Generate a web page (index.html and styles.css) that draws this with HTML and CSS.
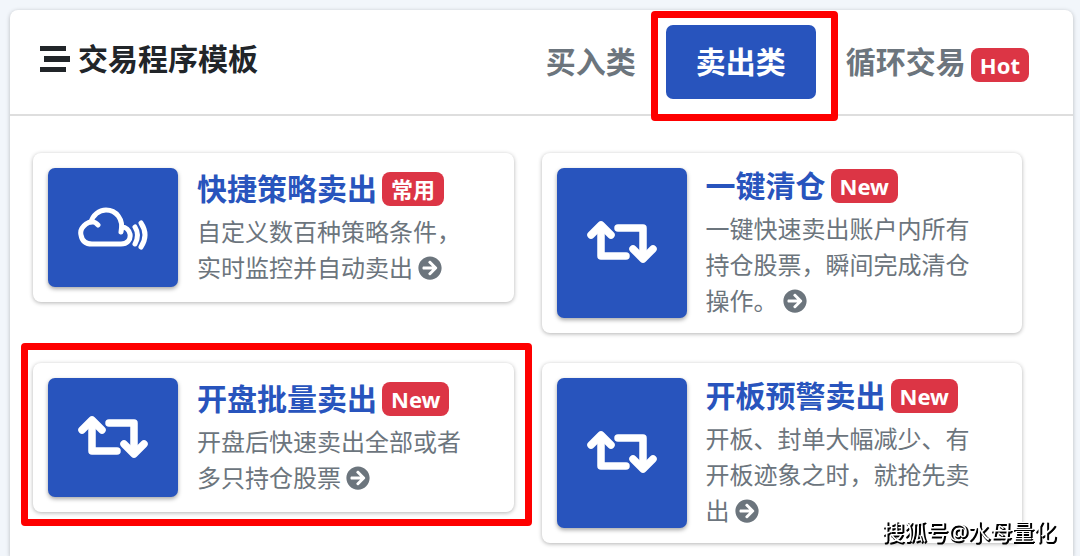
FILE: index.html
```html
<!DOCTYPE html>
<html lang="zh-CN">
<head>
    <meta charset="UTF-8">
    <meta name="viewport" content="width=device-width, initial-scale=1.0">
    <title>交易程序模板</title>
    <link rel="stylesheet" href="styles.css">
</head>
<body>
    <!-- Shared icons -->
    <svg class="sprite" aria-hidden="true">
        <symbol id="icon-retweet" viewBox="0 0 70 44">
            <g fill="none" stroke="#fff" stroke-width="7.500" stroke-linecap="round" stroke-linejoin="round">
                <path d="M4 14 L14 4 L24 14" />
                <path d="M14 5 V35 H39" />
                <path d="M31 7 H56 V37" />
                <path d="M46 28 L56 38 L66 28" />
            </g>
        </symbol>
        <symbol id="icon-arrow" viewBox="0 0 512 512">
            <path fill="currentColor" d="M256 8c137 0 248 111 248 248S393 504 256 504 8 393 8 256 119 8 256 8zm-28.900 143.600l75.500 72.400H120c-13.300 0-24 10.700-24 24v16c0 13.300 10.700 24 24 24h182.600l-75.500 72.400c-9.700 9.300-9.900 24.800-.4 34.300l11 10.900c9.400 9.400 24.600 9.400 33.900 0L404.300 273c9.400-9.400 9.400-24.600 0-33.900L271.600 106.300c-9.400-9.400-24.600-9.400-33.900 0l-11 10.900c-9.500 9.600-9.300 25.100.4 34.400z" />
        </symbol>
    </svg>

    <main class="panel">
        <header class="panel-header">
            <h1 class="panel-title">
                <svg class="stream" viewBox="0 0 30 28" aria-hidden="true">
                    <path fill="currentColor" d="M0 1h26v5H0zM4 11h26v6H4zM0 22h26v5H0z" />
                </svg>
                交易程序模板
            </h1>
            <nav class="tabs">
                <button type="button" class="tab">买入类</button>
                <button type="button" class="tab active marked">卖出类</button>
                <button type="button" class="tab">循环交易<span class="badge">Hot</span></button>
            </nav>
        </header>

        <section class="cards">
            <article class="card">
                <div class="thumb">
                    <svg class="thumb-icon" viewBox="0 0 70 44" aria-hidden="true">
                        <g fill="none" stroke="#fff" stroke-width="5" stroke-linecap="round" stroke-linejoin="round">
                            <path d="M20 19 C17 15 12 15 8 18 C4 21 2 25 3 29 C4 35 8 38 14 38 H43 C49 38 53 34 52 28 C51 24 48 21 44 21" />
                            <path d="M13 16 C15 9 21 4 28 4 C38 4 46 13 43 26" />
                            <path d="M57 21 Q62 29 57 38" />
                            <path d="M63 17 Q71 29 63 41" />
                        </g>
                    </svg>
                </div>
                <div class="card-body">
                    <h2 class="card-title">快捷策略卖出<span class="badge">常用</span></h2>
                    <p class="card-text">自定义数百种策略条件，实时监控并自动卖出 <svg class="arrow"><use href="#icon-arrow" /></svg></p>
                </div>
            </article>

            <article class="card">
                <div class="thumb">
                    <svg class="thumb-icon" aria-hidden="true"><use href="#icon-retweet" /></svg>
                </div>
                <div class="card-body">
                    <h2 class="card-title">一键清仓<span class="badge">New</span></h2>
                    <p class="card-text">一键快速卖出账户内所有持仓股票，瞬间完成清仓操作。 <svg class="arrow"><use href="#icon-arrow" /></svg></p>
                </div>
            </article>

            <article class="card marked">
                <div class="thumb">
                    <svg class="thumb-icon" aria-hidden="true"><use href="#icon-retweet" /></svg>
                </div>
                <div class="card-body">
                    <h2 class="card-title">开盘批量卖出<span class="badge">New</span></h2>
                    <p class="card-text">开盘后快速卖出全部或者多只持仓股票 <svg class="arrow"><use href="#icon-arrow" /></svg></p>
                </div>
            </article>

            <article class="card">
                <div class="thumb">
                    <svg class="thumb-icon" aria-hidden="true"><use href="#icon-retweet" /></svg>
                </div>
                <div class="card-body">
                    <h2 class="card-title">开板预警卖出<span class="badge">New</span></h2>
                    <p class="card-text">开板、封单大幅减少、有开板迹象之时，就抢先卖出 <svg class="arrow"><use href="#icon-arrow" /></svg></p>
                </div>
            </article>
        </section>
    </main>

    <div class="watermark">搜狐号@水母量化</div>
</body>
</html>
```
FILE: styles.css
```css
* {
    box-sizing: border-box;
}

body {
    margin: 0;
    padding: 10px 7px 0 10px;
    background-color: #f2f6fb;
    font-family: 'Noto Sans', 'Noto Sans CJK SC', sans-serif;
    color: #212529;
}

h1, h2, p {
    margin: 0;
}

.sprite {
    position: absolute;
    width: 0;
    height: 0;
}

.panel {
    background-color: #fff;
    border-radius: 8px 8px 0 0;
    box-shadow: 0 1px 4px rgba(0, 0, 0, 0.25);
    padding-bottom: 13px;
}

/* Header and tabs */
.panel-header {
    display: flex;
    justify-content: space-between;
    align-items: flex-start;
    padding: 15px 14px 15px 30px;
    border-bottom: 2px solid #dedede;
}

.panel-title {
    display: flex;
    align-items: center;
    gap: 8px;
    font-size: 30px;
    line-height: 68px;
}

.stream {
    width: 30px;
    height: 28px;
}

.tabs {
    display: flex;
}

.tab {
    display: flex;
    align-items: center;
    height: 74px;
    padding: 0 30px;
    border: none;
    border-radius: 7px;
    background: none;
    color: #6c757d;
    font-family: inherit;
    font-size: 30px;
    font-weight: bold;
    line-height: 34px;
    white-space: nowrap;
    cursor: pointer;
}

.tab.active {
    background-color: #2854bd;
    color: #fff;
}

.badge {
    display: inline-block;
    margin-left: 5px;
    padding: 0 9px;
    border-radius: 8px;
    background-color: #dc3545;
    color: #fff;
    font-size: 22px;
    font-weight: bold;
    line-height: 34px;
}

.tab .badge {
    margin-top: 6px;
}

/* Cards */
.cards {
    display: grid;
    grid-template-columns: 1fr 1fr;
    align-items: start;
    gap: 30px 28px;
    padding: 37px 51px 0 23px;
}

.card {
    display: flex;
    gap: 19px;
    padding: 15px;
    border-radius: 8px;
    background-color: #fff;
    box-shadow: 0 1px 4px rgba(0, 0, 0, 0.3);
}

.thumb {
    display: flex;
    flex: none;
    justify-content: center;
    align-items: center;
    width: 130px;
    min-height: 119px;
    border-radius: 7px;
    background-color: #2854bd;
    box-shadow: 0 2px 4px rgba(0, 0, 0, 0.35);
}

.thumb-icon {
    width: 70px;
    height: 44px;
}

.card-body {
    align-self: center;
    padding-right: 20px;
}

.card-title {
    display: flex;
    align-items: center;
    height: 36px;
    margin-bottom: 6px;
    color: #2854bd;
    font-size: 30px;
    line-height: 34px;
}

.card-text {
    color: #6c757d;
    font-family: 'Noto Sans CJK SC', sans-serif;
    font-size: 24px;
    line-height: 36px;
}

.arrow {
    width: 24px;
    height: 24px;
    vertical-align: -3px;
}

/* Red frames around the highlighted items */
.marked {
    position: relative;
}

.marked::after {
    content: "";
    position: absolute;
    inset: -20px -18px -14px -12px;
    border: 7px solid #fe0000;
    border-radius: 4px;
    pointer-events: none;
}

.tab.marked::after {
    inset: -14px -22px -22px -15px;
}

.watermark {
    position: fixed;
    right: 24px;
    bottom: 10px;
    color: #fff;
    font-size: 22px;
    line-height: 30px;
    text-shadow: 1px 1px 0 #000, 2px 1px 0 #000, 1px 2px 0 #000;
}
```
